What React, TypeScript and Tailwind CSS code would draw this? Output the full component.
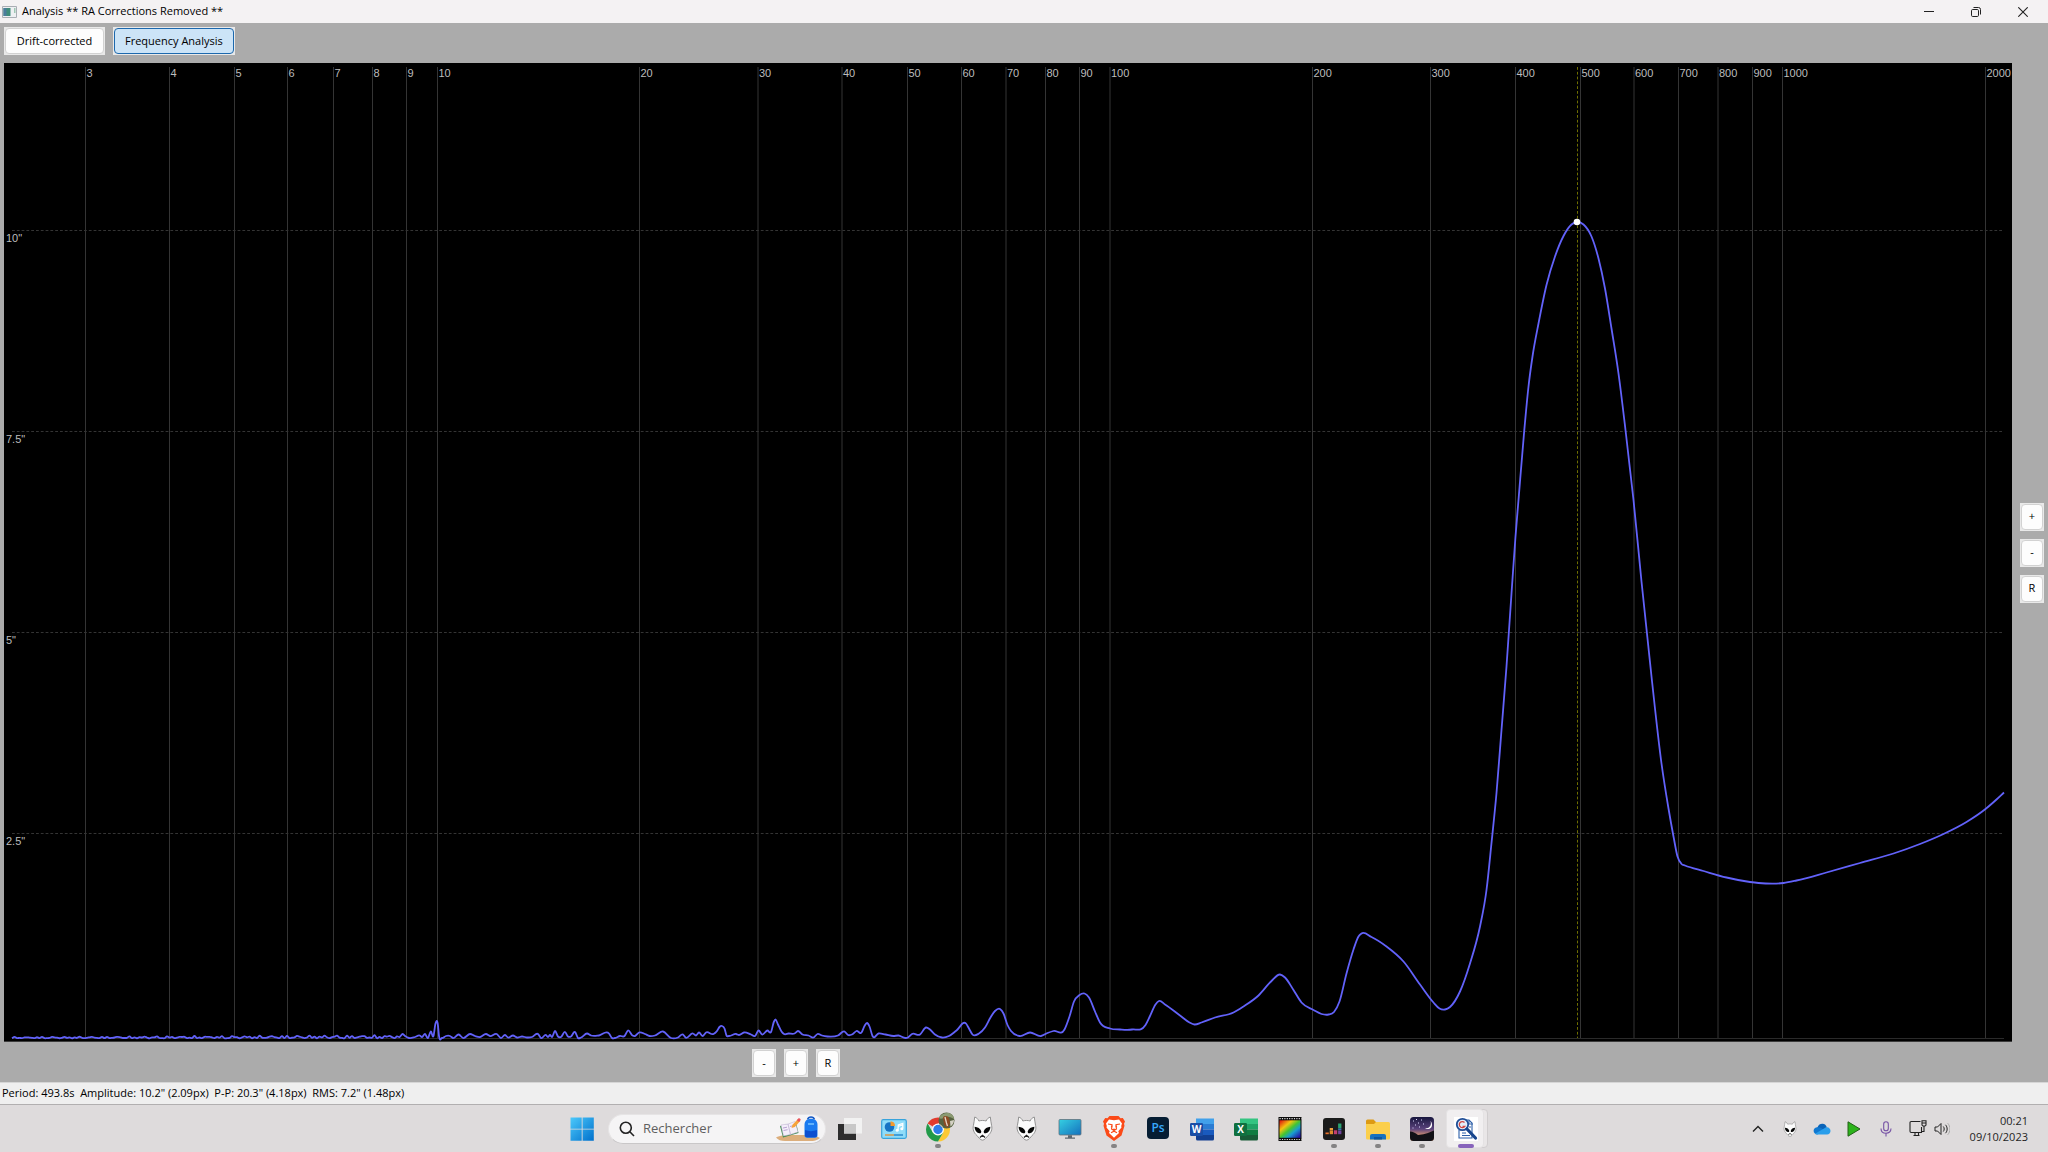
import type { ReactNode } from "react";

type Point = readonly [number, number];

// Plot area in chart units, also used as the svg viewBox
const VIEW = { x: 4, y: 63, w: 2008, h: 979 };

const PERIODS: readonly { label: string; x: number }[] = [
  { label: "3", x: 85.5 },
  { label: "4", x: 169.5 },
  { label: "5", x: 234.5 },
  { label: "6", x: 287.5 },
  { label: "7", x: 333.5 },
  { label: "8", x: 372.5 },
  { label: "9", x: 406.5 },
  { label: "10", x: 437.5 },
  { label: "20", x: 639.5 },
  { label: "30", x: 758 },
  { label: "40", x: 842 },
  { label: "50", x: 907.5 },
  { label: "60", x: 961.5 },
  { label: "70", x: 1006 },
  { label: "80", x: 1045.5 },
  { label: "90", x: 1079.5 },
  { label: "100", x: 1110 },
  { label: "200", x: 1312.5 },
  { label: "300", x: 1430.5 },
  { label: "400", x: 1515.5 },
  { label: "500", x: 1580.5 },
  { label: "600", x: 1634 },
  { label: "700", x: 1678.5 },
  { label: "800", x: 1718 },
  { label: "900", x: 1752.5 },
  { label: "1000", x: 1782.5 },
  { label: "2000", x: 1985.5 },
];

const AMPLITUDES: readonly { label: string; y: number }[] = [
  { label: '10"', y: 230.5 },
  { label: '7.5"', y: 431.5 },
  { label: '5"', y: 632.5 },
  { label: '2.5"', y: 833.5 },
];

// Low level noise between the shortest period and roughly 9s
const NOISE: readonly Point[] = Array.from({ length: 156 }, (_, i) => {
  const x = 12 + i * 2.5;
  const swing = 0.8 + (x / 400) * 1.3;
  const wave = Math.abs(Math.sin(i * 1.7) * Math.sin(i * 0.61 + 1));
  return [x, 1038.3 - wave * swing * 1.6] as const;
});

const SPECTRUM: readonly Point[] = [
  ...NOISE,
  [402.7, 1034], [405, 1036], [409, 1038], [415, 1037], [419.7, 1035.5], [422, 1037], [425, 1034], [428, 1038],
  [430.7, 1031.5], [433.5, 1036], [435.5, 1023.5], [437.7, 1023.5], [439, 1036], [442, 1038], [446, 1036],
  [450, 1036], [453, 1038], [458.7, 1034.5], [463, 1038], [470, 1034], [475, 1036], [480, 1037], [486, 1034],
  [490, 1036], [496.7, 1034], [501, 1038], [505, 1035], [508, 1037.5], [513, 1035.5], [517, 1037.5], [522, 1036.5],
  [527, 1037.5], [532, 1037], [538, 1034], [541, 1038], [546, 1035], [548, 1037], [550, 1035], [552, 1037],
  [555, 1031], [558, 1036.5], [561, 1037], [565, 1032], [568, 1036.5], [571, 1036.5], [575, 1032], [578, 1038],
  [581, 1037.5], [587, 1033.5], [591, 1035.5], [599, 1035.5], [609, 1033.5], [612, 1038], [615, 1038], [620, 1036],
  [624.5, 1036], [628, 1030.5], [632.5, 1035.5], [635, 1036], [639, 1032.5], [645, 1034], [649.5, 1036],
  [655, 1035.5], [663, 1031.5], [671, 1038], [678, 1037.5], [683, 1034.5], [685.5, 1037.5], [693, 1033.5],
  [696, 1035.5], [699, 1032.5], [702.5, 1036], [706, 1032.5], [713.5, 1034], [717, 1031], [719.5, 1027],
  [722, 1026], [724.5, 1028.5], [726.5, 1035.5], [729, 1036], [736, 1034], [739, 1035], [744, 1032.5],
  [751, 1034.5], [755, 1036], [758.5, 1030.5], [762, 1034.5], [767.5, 1030.5], [771, 1032], [774, 1021.5],
  [775.5, 1019.5], [778, 1024.5], [781.5, 1031.5], [784, 1034], [788.5, 1033.5], [794.5, 1033.5], [798, 1031],
  [802.5, 1034.5], [808.5, 1035.5], [813.5, 1037.5], [817.5, 1034], [822, 1035.5], [827.5, 1036.5], [838, 1035.5],
  [844.5, 1031.5], [848, 1035], [852, 1034.5], [856.5, 1031], [861.5, 1032.5], [864.5, 1026], [867, 1023],
  [869.5, 1026.5], [872.5, 1036], [878.5, 1033.5], [885.5, 1034.5], [893.5, 1036], [898.5, 1035.5], [905.5, 1038],
  [908, 1037.5], [912, 1034], [920, 1034.5], [926, 1027.5], [930, 1029.5], [935, 1034.5], [942, 1037.5],
  [949, 1036], [956.5, 1030.5], [966, 1023.5], [969.5, 1029.5], [972.5, 1034.5], [979, 1033.5], [985, 1027.5],
  [990.5, 1017.5], [995, 1011], [1000, 1009], [1003.5, 1013.5], [1007.5, 1025], [1011, 1031], [1019.5, 1036],
  [1030, 1032.5], [1041, 1036], [1047.5, 1033], [1053.5, 1031], [1064.5, 1029.5], [1069.5, 1016.5],
  [1074, 1001.5], [1079.5, 995], [1084.5, 993.5], [1089, 997.5], [1095, 1011.5], [1100, 1022.5], [1110, 1028.5],
  [1120, 1029.5], [1132, 1029.5], [1145.5, 1025], [1150, 1016], [1155.5, 1004.5], [1159, 1001], [1165, 1004.5],
  [1180, 1015.5], [1189.5, 1022.5], [1194.5, 1024.5], [1201.5, 1022.5], [1215, 1017.5], [1233.5, 1012.5],
  [1243.5, 1006.5], [1258.5, 995.5], [1271.5, 981], [1280, 974.5], [1285, 977.5], [1293.5, 990], [1301.5, 1002.5],
  [1313.5, 1010], [1321.5, 1014], [1328.5, 1014.5], [1334, 1012], [1339.5, 1001.5], [1346.5, 973.5],
  [1353.5, 949.5], [1358.5, 936.5], [1361.5, 933.5], [1371.5, 937], [1386.5, 946.5], [1403.5, 961.5],
  [1420, 984.5], [1433.5, 1002.5], [1439.5, 1008.5], [1445, 1009.5], [1450, 1007], [1460, 991.5], [1470, 963.5],
  [1480, 926.5], [1486.5, 890], [1491.5, 843], [1496.5, 793], [1501.5, 730], [1506.5, 666.5], [1511.5, 593.5],
  [1515.5, 536.5], [1518.5, 500], [1524, 433.5], [1528.5, 386.5], [1532.5, 356.5], [1538.5, 323.5],
  [1546.5, 285], [1555, 256.5], [1563.5, 236], [1571.5, 224.5], [1577, 222], [1583.5, 224.5], [1591.5, 236.5],
  [1598.5, 258.5], [1605, 288.5], [1611.5, 328.5], [1618.5, 373.5], [1625.5, 430], [1633.5, 500], [1641.5, 581.5],
  [1651.5, 676.5], [1661.5, 763.5], [1668.5, 808.5], [1673.5, 836.5], [1677.5, 856.5], [1681.5, 864],
  [1685, 865.5], [1703.5, 871], [1726.5, 877.5], [1750, 882], [1758.5, 883], [1783.5, 883], [1796.5, 880.5],
  [1826.5, 872.5], [1860, 863], [1893.5, 853.5], [1920, 844], [1943.5, 834], [1966.5, 822], [1985.5, 809],
  [1996.5, 799.5], [2004, 792.5],
];

const slope = (a: Point, b: Point) => (b[1] - a[1]) / (b[0] - a[0] || 1);

// Tangent at point i, the neighbouring slopes weighted by distance
function tangent(points: readonly Point[], i: number): number {
  if (i === 0) return slope(points[0], points[1]);
  if (i === points.length - 1) return slope(points[i - 1], points[i]);
  const before = points[i][0] - points[i - 1][0];
  const after = points[i + 1][0] - points[i][0];
  return (slope(points[i - 1], points[i]) * after + slope(points[i], points[i + 1]) * before) / (before + after);
}

function toPath(points: readonly Point[]): string {
  let d = `M${points[0][0]} ${points[0][1]}`;
  for (let i = 0; i < points.length - 1; i++) {
    const [x1, y1] = points[i];
    const [x2, y2] = points[i + 1];
    const reach = (x2 - x1) / 3;
    d += `C${x1 + reach} ${y1 + tangent(points, i) * reach} ${x2 - reach} ${y2 - tangent(points, i + 1) * reach} ${x2} ${y2}`;
  }
  return d;
}

const SPECTRUM_PATH = toPath(SPECTRUM);

const pctX = (x: number) => `${((x - VIEW.x) / VIEW.w) * 100}%`;
const pctY = (y: number) => `${((y - VIEW.y) / VIEW.h) * 100}%`;

function Chart() {
  return (
    <svg
      className="block h-full min-h-0 w-full bg-black font-['Liberation_Sans',sans-serif] text-[11px]"
      role="img"
      aria-label="Frequency analysis"
    >
      <svg viewBox={`${VIEW.x} ${VIEW.y} ${VIEW.w} ${VIEW.h}`} preserveAspectRatio="none" width="100%" height="100%">
        <g stroke="#343434">
          {PERIODS.map((p) => (
            <line key={p.label} x1={p.x} x2={p.x} y1={67} y2={1038} />
          ))}
          <line x1={12} x2={2004} y1={1038.5} y2={1038.5} stroke="#2a2a2a" />
          {AMPLITUDES.map((a) => (
            <line key={a.label} x1={12} x2={2004} y1={a.y} y2={a.y} strokeDasharray="2.8 2" />
          ))}
        </g>
        <line x1={4} x2={2012} y1={1041.5} y2={1041.5} stroke="#3c3c3c" />
        <path d={SPECTRUM_PATH} fill="none" stroke="#6262fa" strokeWidth={1.8} strokeLinejoin="round" />
        <line x1={1577.5} x2={1577.5} y1={67} y2={1038} stroke="#6e6e00" strokeDasharray="2.8 2" />
        <circle cx={1577} cy={222} r={3.3} fill="#fff" />
      </svg>
      <g fill="#bdbdbd">
        {PERIODS.map((p) => (
          <text key={p.label} x={pctX(p.x + 1)} y={pctY(77)}>
            {p.label}
          </text>
        ))}
        {AMPLITUDES.map((a) => (
          <text key={a.label} x={pctX(6)} y={pctY(a.y + 11)}>
            {a.label}
          </text>
        ))}
      </g>
    </svg>
  );
}

function ZoomButton({ children, label }: { readonly children: ReactNode; readonly label: string }) {
  return (
    <button aria-label={label} className="h-7 w-6 bg-[#e9e9e9] p-px text-[11px]">
      <span className="flex h-full items-center justify-center rounded-sm border border-[#d2d2d2] bg-[#fdfdfd]">
        {children}
      </span>
    </button>
  );
}

function Alien({ size }: { readonly size: number }) {
  return (
    <svg width={size} height={size} viewBox="0 0 24 24">
      <path
        d="M4.500 1c2 .6 3.300 2 4 3.800 2.200-.7 4.800-.7 7 0 .7-1.800 2-3.200 4-3.800.6 3 .4 5.200 1.200 8 1 4-.6 7.300-3.200 9.600-1.600 1.700-3.300 4.600-5.500 4.600s-3.900-2.900-5.500-4.600C3.900 16.300 2.300 13 3.300 9c.8-2.800.6-5 1.200-8Z"
        fill="#fbfbfb"
        stroke="#8b8b8b"
        strokeWidth=".9"
      />
      <path d="M4.400 10.200c3 .2 5.700 1.800 6.400 4.400.2 1.500-.6 2.300-2 1.900-2.700-.7-4.400-3.200-4.400-6.300ZM19.600 10.200c-3 .2-5.700 1.800-6.400 4.400-.2 1.500.6 2.300 2 1.900 2.700-.7 4.400-3.200 4.400-6.300Z" fill="#050505" />
      <path d="m9.500 20.600 2.500-2 2.500 2" fill="none" stroke="#222" strokeWidth="1.200" />
    </svg>
  );
}

function WindowsLogo() {
  return (
    <svg width="24" height="24" viewBox="0 0 24 24">
      <defs>
        <linearGradient id="win" x1="0" y1="0" x2="1" y2="1" gradientUnits="objectBoundingBox">
          <stop offset="0" stopColor="#4cc9fb" />
          <stop offset="1" stopColor="#0070cc" />
        </linearGradient>
      </defs>
      <path d="M.5.5h11.200v11.200H.5ZM12.600.5h11.200v11.200H12.600ZM.5 12.600h11.200v11.200H.5ZM12.600 12.600h11.200v11.200H12.600Z" fill="url(#win)" />
    </svg>
  );
}

function SchoolArt() {
  return (
    <svg width="46" height="26" viewBox="0 0 46 26">
      <path d="M1 21.500c4-2.200 8-2.600 22-2.600s18 .4 22 3.100c-3 2.600-6 3-10 3H10c-4 0-7-1-9-3.500Z" fill="#dcae7c" />
      <path d="m5 10 16-3.500 2.500 10.500L8 21.500Z" fill="#3f8b4c" />
      <path d="m6 9 7-1 2.500 10.500L8.500 20ZM13 8l7-2.500 3 10.500-7.500 2.500Z" fill="#f4eefa" stroke="#bcaed0" strokeWidth=".5" />
      <path d="m8 12 4-.8M8.600 14.500l4-.8M15 10.500l4-1" stroke="#b8a3d2" />
      <path d="m16.500 12 1-3.300L23 3l2.300 2-5.500 6Z" fill="#f6a33b" />
      <path d="m21.800 4.200 1.700-1.900c1.200-.6 2.600.7 2 1.900L24 6Z" fill="#e9545d" />
      <path d="M32.500 3.500C33 1.800 34 1 36 1s3 .8 3.500 2.500" fill="none" stroke="#1458c4" strokeWidth="1.500" />
      <path d="M29.500 9c0-4 2.500-6.200 6.500-6.200s6.500 2.200 6.500 6.200v10c0 2-.8 2.700-2.500 2.700h-8c-1.700 0-2.500-.7-2.500-2.700Z" fill="#1a7bf0" />
      <path d="M30 14c4 1.500 8 1.500 12 0v5c0 1.500-.7 2.200-2 2.200h-8c-1.300 0-2-.7-2-2.200Z" fill="#0d4fd0" />
      <path d="M33 8h6" stroke="#72c1ff" strokeWidth="1.600" />
    </svg>
  );
}

function TaskView() {
  return (
    <svg width="26" height="24" viewBox="0 0 26 24">
      <path d="M1 7h18v16H1Z" fill="#2d2d2d" />
      <path d="M7 1h18v15.500H7Z" fill="#f3f3f3" fillOpacity=".93" />
      <path d="M7 7h12v9.500H7Z" fill="#c8c8c8" />
    </svg>
  );
}

function ControlPanel() {
  return (
    <svg width="26" height="20" viewBox="0 0 26 20">
      <rect x=".7" y=".7" width="24.600" height="18.600" rx="1.500" fill="#8fdcf9" stroke="#38a3db" strokeWidth="1.200" />
      <circle cx="8.500" cy="8" r="4.800" fill="#1673c4" />
      <path d="M9.500 7V2.200A4.800 4.800 0 0 1 14 7Z" fill="#f29a2e" />
      <path d="m17 11 .3-5 4.500-1.500v5M17 7.500l4.500-1.500" stroke="#fff" strokeWidth="1.300" fill="none" />
      <circle cx="16.200" cy="11.200" r="1.500" fill="#fff" />
      <circle cx="20.800" cy="9.800" r="1.500" fill="#fff" />
      <path d="M4 16h9" stroke="#e38c2c" strokeWidth="1.300" />
      <path d="M13 16h9" stroke="#1b7cc6" strokeWidth="1.300" />
    </svg>
  );
}

function Chrome() {
  return (
    <svg width="34" height="34" viewBox="-4 0 34 34">
      <path d="M13 17.500 2.610 11.500A12 12 0 0 1 23.390 11.500H13Z" fill="#e23b2e" />
      <path d="M13 17.500 23.390 11.500A12 12 0 0 1 13 29.500L18.200 20.500Z" fill="#fcc934" />
      <path d="M13 17.500 18.200 20.500 13 29.500A12 12 0 0 1 2.610 11.500L7.800 20.500Z" fill="#229a49" />
      <circle cx="13" cy="17.500" r="5.900" fill="#fff" />
      <circle cx="13" cy="17.500" r="4.700" fill="#2f7de9" />
      <circle cx="21.500" cy="8.500" r="8" fill="#566240" />
      <path d="M14 6c2-4 6-5.500 10-5 3 1 5 3.500 5.200 6-3-1.500-5-3-8-2s-5 2.500-7.200 1Z" fill="#8b9a72" />
      <path d="M18 5c2-2 5-1 6 1l1 5-2 5-4-3Z" fill="#8c4a22" />
      <path d="m20 5 1.500 6 1 3" stroke="#e7d5c4" strokeWidth="1.300" fill="none" />
      <path d="M14.500 12c2 1 3 2 4 4-2-.8-3.300-2-4-4ZM25 9l4-1c0 3-1.500 5-3.500 6.500Z" fill="#d4d1c4" />
    </svg>
  );
}

function Monitor() {
  return (
    <svg width="24" height="22" viewBox="0 0 24 22">
      <defs>
        <linearGradient id="screen" x1="0" y1="0" x2="1" y2="1">
          <stop offset="0" stopColor="#35d0e2" />
          <stop offset="1" stopColor="#1470bd" />
        </linearGradient>
      </defs>
      <rect x="1" y="1.500" width="22" height="15.500" rx="1" fill="url(#screen)" stroke="#62717b" strokeWidth=".8" />
      <path d="M10 17.200h4v2.300h3v1.300H7v-1.300h3Z" fill="#5d6870" />
    </svg>
  );
}

function Brave() {
  return (
    <svg width="22" height="25" viewBox="0 0 22 25">
      <path d="m6.500 0h9l2 2.300 2.300-.3L22 5.500l-1 2.200.5 2-3 9.800L11 25l-7.500-5.500-3-9.800.5-2-1-2.200L2.200 2l2.300.3Z" fill="#fb4a18" />
      <path d="m11 4.200 5-.7 3 4-.8 2.500.3 1.500-3.200 3.800.7 1.700L11 21.800 6 17l.7-1.700-3.200-3.800.3-1.500L3 7.500l3-4Z" fill="#fff" />
      <path d="m5 8 4 .8-.7 2.700M17 8l-4 .8.700 2.700M9.300 9.500 8.500 13l2.500 1.500 2.500-1.500-.8-3.500M8 16.800l3-1.600 3 1.600M11 14.500v-2" fill="none" stroke="#fb4a18" strokeWidth="1.100" />
    </svg>
  );
}

function Photoshop() {
  return (
    <svg width="24" height="24" viewBox="0 0 24 24">
      <rect x="1" y="0" width="22" height="22" rx="4" fill="#061d33" />
      <text x="12" y="15" textAnchor="middle" fontSize="12" fontWeight="600" fill="#37a9fb" fontFamily="Open Sans, sans-serif">
        Ps
      </text>
    </svg>
  );
}

const WORD = ["#41a0ea", "#2b7cd3", "#195abe", "#123f91", "#1a4ea6"];
const EXCEL = ["#34c481", "#21a366", "#107c41", "#185c37", "#107040"];

function OfficeTile({ letter, shades }: { readonly letter: string; readonly shades: readonly string[] }) {
  return (
    <svg width="24" height="24" viewBox="0 0 24 24">
      <path d="M6 1.500h18v5.500H6Z" fill={shades[0]} />
      <path d="M6 7h18v5.500H6Z" fill={shades[1]} />
      <path d="M6 12.500h18V18H6Z" fill={shades[2]} />
      <path d="M6 18h18v4q0 1.500-1.500 1.500h-15Q6 23.500 6 22Z" fill={shades[3]} />
      <rect x="0" y="6" width="13" height="13" rx="1.200" fill={shades[4]} />
      <text x="6.500" y="16" textAnchor="middle" fontSize="10" fontWeight="700" fill="#fff" fontFamily="Open Sans, sans-serif">
        {letter}
      </text>
    </svg>
  );
}

function FilmStrip() {
  return (
    <svg width="24" height="24" viewBox="0 0 24 24">
      <defs>
        <linearGradient id="film" x1="0" y1="0" x2="1" y2="1">
          <stop offset=".05" stopColor="#e02510" />
          <stop offset=".3" stopColor="#f4c410" />
          <stop offset=".5" stopColor="#45c531" />
          <stop offset=".68" stopColor="#189ed0" />
          <stop offset=".95" stopColor="#2614a5" />
        </linearGradient>
      </defs>
      <path d="M.5 0h23v24H.5Z" fill="#0a0a0a" />
      <path d="M1.500 3.300h21v17.500h-21Z" fill="url(#film)" />
      <path d="M1.500 1.600h22M1.500 22.500h22" stroke="#ddd" strokeWidth="1.200" strokeDasharray="1.200 1.200" />
    </svg>
  );
}

function Deezer() {
  return (
    <svg width="24" height="24" viewBox="0 0 24 24">
      <rect x="1" y="1" width="22" height="22" rx="3" fill="#1b1b1b" />
      <path d="M3.500 15.500h3.300v1.700H3.500Z" fill="#e8702a" />
      <path d="M7.700 11h3.300v2H7.700Z" fill="#f2a23c" />
      <path d="M7.700 13.300h3.300v3.900H7.700Z" fill="#dd8c2b" />
      <path d="M11.900 13.300h3.300v3.900h-3.300Z" fill="#c23f70" />
      <path d="M16.100 6.500h3.300v4.500h-3.300Z" fill="#2aa372" />
      <path d="M16.100 11.300h3.300v2h-3.300Z" fill="#3879ad" />
      <path d="M16.100 13.600h3.300v3.600h-3.300Z" fill="#70449d" />
    </svg>
  );
}

function Folder() {
  return (
    <svg width="26" height="24" viewBox="0 0 26 24">
      <path d="M1 4q0-1.500 1.500-1.500h6L11 5h8v4H1Z" fill="#dd9a13" />
      <path d="M1 7h8l2-2h12.500Q25 5 25 6.500V21q0 1.500-1.500 1.500h-21Q1 22.500 1 21Z" fill="#fbcf4c" />
      <path d="M5 22.500V19q0-2 2-2h12q2 0 2 2v3.500Z" fill="#1673bf" />
      <path d="M9 20h8v2.500H9Z" fill="#0d569d" />
    </svg>
  );
}

function NightSky() {
  return (
    <svg width="24" height="24" viewBox="0 0 24 24">
      <defs>
        <linearGradient id="sky" x1="0" y1="0" x2="0" y2="1">
          <stop offset="0" stopColor="#17163d" />
          <stop offset=".5" stopColor="#5b437d" />
          <stop offset=".8" stopColor="#e09a70" />
        </linearGradient>
      </defs>
      <rect width="24" height="24" rx="3.500" fill="url(#sky)" />
      <path d="M0 14.500c3 0 5 1.500 8 3.500 5-.4 9-1.500 16-4.500v7q0 3.500-3.500 3.500h-17Q0 24 0 20.500Z" fill="#111116" />
      <path d="M20.500 4c1.400 4.200-.8 7.400-5.500 7.500 4 1.600 7.300-.4 7-4-.1-1.600-.6-2.700-1.500-3.500Z" fill="#fff" />
      <path d="M3 4h1M6 2.500h1M8 6h1M11 3h1M5 8h1M2.500 11h1M13 7h1M9 10h1" stroke="#dcd9ff" />
    </svg>
  );
}

function LogViewer() {
  return (
    <svg width="24" height="24" viewBox="0 0 24 24">
      <path d="M0 0h24v24H0Z" fill="#fff" />
      <path d="M5 13v8h13V6l-3-3h-3" fill="none" stroke="#2d5fa8" strokeWidth="1.100" />
      <path d="M15 3v4h4M8 16h4M8 18.500h8M15 10h2" fill="none" stroke="#2d5fa8" />
      <circle cx="8.500" cy="7.500" r="5.700" fill="#e2edf9" stroke="#1f4d95" strokeWidth="1.800" />
      <path d="m13 12 8.500 9" stroke="#18458c" strokeWidth="3.200" strokeLinecap="round" />
      <path d="M10.500 5.500a3 3 0 1 0 .3 3.800H8.500" fill="none" stroke="#d14743" strokeWidth="1.300" />
    </svg>
  );
}

interface TaskbarApp {
  readonly name: string;
  readonly icon: ReactNode;
  readonly running?: boolean;
  readonly active?: boolean;
}

const APPS: readonly TaskbarApp[] = [
  { name: "Task view", icon: <TaskView /> },
  { name: "Control panel", icon: <ControlPanel /> },
  { name: "Chrome", icon: <Chrome />, running: true },
  { name: "foobar2000", icon: <Alien size={25} /> },
  { name: "foobar2000 library", icon: <Alien size={25} /> },
  { name: "Desktop", icon: <Monitor /> },
  { name: "Brave", icon: <Brave />, running: true },
  { name: "Photoshop", icon: <Photoshop /> },
  { name: "Word", icon: <OfficeTile letter="W" shades={WORD} /> },
  { name: "Excel", icon: <OfficeTile letter="X" shades={EXCEL} /> },
  { name: "Video", icon: <FilmStrip /> },
  { name: "Deezer", icon: <Deezer />, running: true },
  { name: "Explorer", icon: <Folder />, running: true },
  { name: "Stellarium", icon: <NightSky />, running: true },
  { name: "Log viewer", icon: <LogViewer />, active: true },
];

function AppButton({ app }: { readonly app: TaskbarApp }) {
  return (
    <button aria-label={app.name} className="relative flex h-[47px] w-11 items-center justify-center">
      {app.active && (
        <>
          <span className="absolute inset-y-1 right-0 w-8 rounded border border-[#d0cdce] bg-[#e9e6e7]" />
          <span className="absolute inset-y-1 left-0.5 right-1 rounded border border-[#e4e2e3] bg-[#f1eff0]" />
        </>
      )}
      <span className="relative">{app.icon}</span>
      {app.running && <span className="absolute bottom-1 left-1/2 h-1 w-1.5 -translate-x-1/2 rounded-full bg-[#858384]" />}
      {app.active && <span className="absolute bottom-1 left-1/2 h-1 w-4 -translate-x-1/2 rounded-full bg-[#8763bb]" />}
    </button>
  );
}

function Tray() {
  return (
    <div className="flex items-center justify-end pr-5">
      <button aria-label="Hidden icons" className="flex w-8 justify-center">
        <svg width="12" height="8" viewBox="0 0 12 8">
          <path d="m1 6.500 5-5 5 5" fill="none" stroke="#222" strokeWidth="1.400" />
        </svg>
      </button>
      <button aria-label="foobar2000 tray" className="flex w-8 justify-center">
        <Alien size={16} />
      </button>
      <button aria-label="OneDrive" className="flex w-8 justify-center">
        <svg width="18" height="12" viewBox="0 0 18 12">
          <path d="M4.500 4.200C5.500 1.800 7.500.6 9.600.8c2.100.2 3.700 1.600 4.200 3.500L9 9 3 8Z" fill="#0a63b8" />
          <path d="M4.500 4.200C2.200 4.200.6 5.800.6 7.800s1.600 3.700 3.700 3.700L13 8 8 5c-1-.6-2.200-.9-3.500-.8Z" fill="#1178d0" />
          <path d="M2 10.800 11 5.500c1-.9 2-1.200 3-1.200 2.100.1 3.500 1.700 3.500 3.600s-1.500 3.600-3.400 3.600H4.300c-.9 0-1.700-.3-2.300-.7Z" fill="#2a9eeb" />
        </svg>
      </button>
      <button aria-label="Play" className="flex w-8 justify-center">
        <svg width="14" height="16" viewBox="0 0 14 16">
          <path d="M1 .8 13 8 1 15.200Z" fill="#2cb31b" stroke="#246019" />
        </svg>
      </button>
      <button aria-label="Microphone" className="flex w-8 justify-center">
        <svg width="12" height="16" viewBox="0 0 12 16">
          <rect x="3.700" y=".7" width="4.600" height="9" rx="2.300" fill="none" stroke="#7652a5" strokeWidth="1.100" />
          <path d="M1 7.500c0 3 2 4.800 5 4.800s5-1.800 5-4.800M6 12.300v3.200" fill="none" stroke="#7652a5" strokeWidth="1.100" />
        </svg>
      </button>
      <button aria-label="Network" className="flex w-8 justify-center">
        <svg width="18" height="17" viewBox="0 0 18 17">
          <path d="M11.500 1.500H2.200Q1 1.500 1 2.700v8.600q0 1.200 1.200 1.200H12.500V7M4.500 15.500h6M6 12.500v3M9.500 12.500v3M15 6v5.500h-2.500" fill="none" stroke="#222" strokeWidth="1.100" />
          <path d="M13 .8h4v4q0 1.200-1.200 1.200h-1.600Q13 6 13 4.800ZM13 3h4" fill="none" stroke="#222" strokeWidth="1.100" />
        </svg>
      </button>
      <button aria-label="Volume" className="flex w-4 justify-center">
        <svg width="16" height="14" viewBox="0 0 16 14">
          <path d="M1 5h2.500L7 1.500v11L3.500 9H1Z" fill="none" stroke="#222" strokeLinejoin="round" />
          <path d="M9.300 4.500c1.200 1.500 1.200 3.500 0 5M11.500 2.800c2.200 2.500 2.200 6 0 8.400" fill="none" stroke="#222" />
          <path d="M13.700 1.200c3 3.500 3 8.100 0 11.600" fill="none" stroke="#aaa" />
        </svg>
      </button>
      <div className="w-[78px] text-right text-[11px] leading-4 text-[#1f1f1f]">
        <div>00:21</div>
        <div>09/10/2023</div>
      </div>
    </div>
  );
}

function TitleBar() {
  return (
    <header className="flex h-[23px] items-center bg-[#f4f2f3] px-0.5 text-[11px] text-black">
      <svg width="15" height="12" viewBox="0 0 15 12">
        <path d="M.5.5h14v11H.5Z" fill="#eef0f2" stroke="#a9aeb4" />
        <path d="M1.500 2h7v8h-7Z" fill="#3f8d7b" />
        <path d="M1.500 2h3v8h-3Z" fill="#4b7d9c" />
        <path d="M12 2h1.500v5H12Z" fill="#9fc7b4" />
      </svg>
      <h1 className="ml-[5px]">Analysis ** RA Corrections Removed **</h1>
      <div className="ml-auto flex">
        <button aria-label="Minimize" className="flex h-[23px] w-[47px] items-center justify-center">
          <svg width="10" height="10" viewBox="0 0 10 10">
            <path d="M0 4.500h10" stroke="#222" />
          </svg>
        </button>
        <button aria-label="Restore" className="flex h-[23px] w-[47px] items-center justify-center">
          <svg width="10" height="10" viewBox="0 0 10 10" fill="none" stroke="#222">
            <rect x=".5" y="2.500" width="7" height="7" rx="1.200" />
            <path d="M2.500.5h5q2 0 2 2v5" />
          </svg>
        </button>
        <button aria-label="Close" className="flex h-[23px] w-[47px] items-center justify-center">
          <svg width="10" height="10" viewBox="0 0 10 10">
            <path d="m.3.300 9.400 9.400M9.700.3.300 9.700" stroke="#222" strokeWidth="1.100" />
          </svg>
        </button>
      </div>
    </header>
  );
}

export default function App() {
  return (
    <div className="flex h-screen flex-col overflow-hidden bg-[#ababab] font-['Open_Sans','Noto_Sans',sans-serif] text-black">
      <TitleBar />

      <nav className="flex h-10 items-start gap-2 px-1 pt-1 text-[11px]">
        <button className="h-7 min-w-[101px] bg-[#e9e9e9] p-px">
          <span className="flex h-full items-center justify-center rounded-sm border border-[#d2d2d2] bg-[#fdfdfd] px-2.5">
            Drift-corrected
          </span>
        </button>
        <button className="h-7 bg-[#e9e9e9] p-px">
          <span className="flex h-full items-center justify-center rounded-sm border border-[#1c68ad] bg-[#cce4f7] px-2.5">
            Frequency Analysis
          </span>
        </button>
      </nav>

      <main className="flex min-h-0 flex-1">
        <div className="min-h-0 min-w-0 flex-1 pl-1">
          <Chart />
        </div>
        <div className="flex w-9 flex-col items-center justify-center gap-2 pl-1">
          <ZoomButton label="Zoom in amplitude">+</ZoomButton>
          <ZoomButton label="Zoom out amplitude">-</ZoomButton>
          <ZoomButton label="Reset amplitude">R</ZoomButton>
        </div>
      </main>

      <div className="flex h-10 items-start gap-2 pt-[7px] pl-[752px]">
        <ZoomButton label="Zoom out period">-</ZoomButton>
        <ZoomButton label="Zoom in period">+</ZoomButton>
        <ZoomButton label="Reset period">R</ZoomButton>
      </div>

      <footer className="flex h-[23px] items-center border-t border-b border-t-[#d6d6d6] border-b-[#b1afb0] bg-[#efefef] pl-0.5 text-[11px] whitespace-pre">
        {'Period: 493.8s  Amplitude: 10.2" (2.09px)  P-P: 20.3" (4.18px)  RMS: 7.2" (1.48px)'}
      </footer>

      <div className="grid h-[47px] grid-cols-[1fr_auto_1fr] items-center bg-[#dedbdc]">
        <div />
        <div className="flex items-center">
          <button aria-label="Start" className="flex h-[47px] w-11 items-center justify-center">
            <WindowsLogo />
          </button>
          <label className="mr-0.5 ml-1 flex h-[30px] w-[218px] items-center rounded-full border border-[#e6e4e5] border-b-[#c9c7c8] bg-[#f5f4f5] pr-1 pl-2.5">
            <svg className="shrink-0" width="16" height="16" viewBox="0 0 16 16" fill="none" stroke="#222" strokeWidth="1.600">
              <circle cx="6.800" cy="6.800" r="5.500" />
              <path d="m10.800 10.800 4.200 4.200" />
            </svg>
            <input
              aria-label="Rechercher"
              placeholder="Rechercher"
              className="ml-2 min-w-0 flex-1 bg-transparent text-[13px] text-[#555] outline-none placeholder:text-[#5f5f5f]"
            />
            <SchoolArt />
          </label>
          {APPS.map((app) => (
            <AppButton key={app.name} app={app} />
          ))}
        </div>
        <Tray />
      </div>
    </div>
  );
}
